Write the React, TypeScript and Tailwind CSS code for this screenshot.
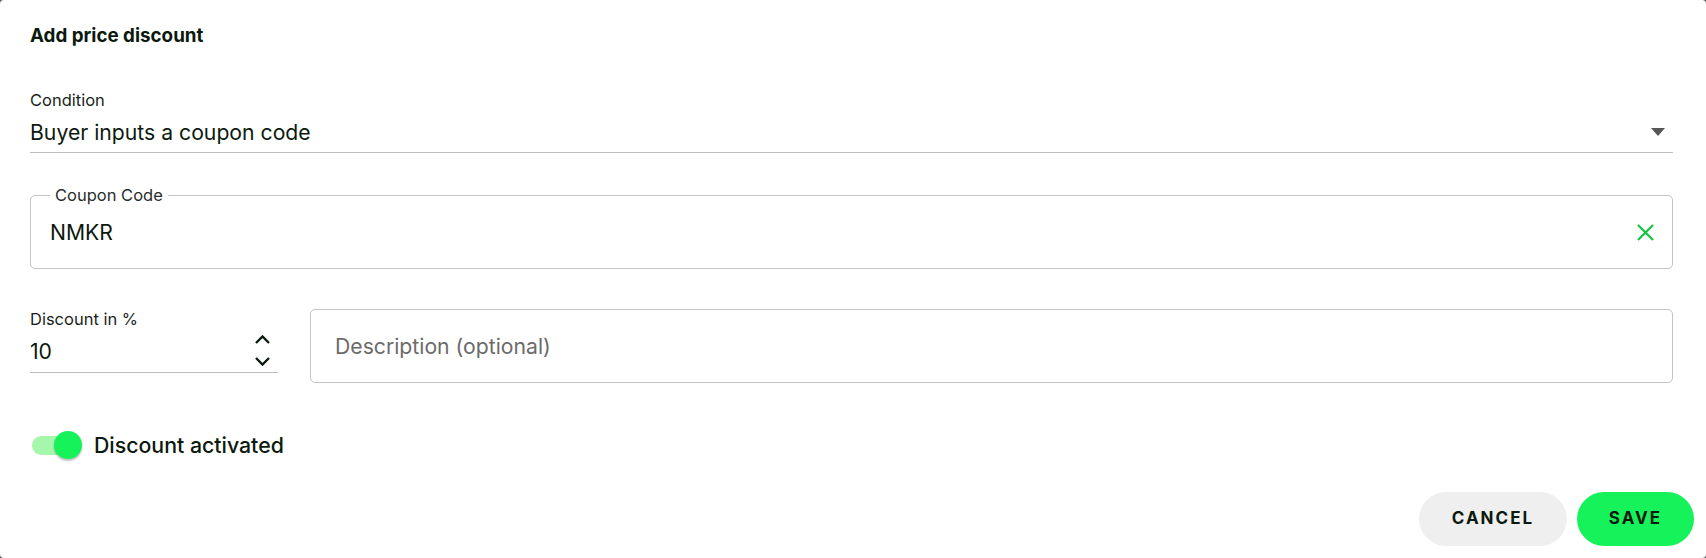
export default function App() {
  return (
    <div className="w-full h-[558px] bg-[#5c5c5c]">
      <div className="h-full bg-white rounded-[4px] flex flex-col font-['Inter',sans-serif] text-[#0c1a0e]">
        <div className="pl-[30px] pr-[33px] pt-[24px] flex flex-col">
          <h2 className="text-[18.8px] leading-[24px] font-bold">Add price discount</h2>

          <div className="mt-[42px] text-[16.5px] leading-[20px] text-[#1a1f1b]">Condition</div>
          <div className="mt-[8px] flex items-center justify-between border-b border-[#bdbdbd] pb-[6px]">
            <span className="text-[21.2px] leading-[28px]">Buyer inputs a coupon code</span>
            <svg width="14" height="8" viewBox="0 0 14 8" className="mr-[8px]">
              <path d="M0 0 L14 0 L7 8 Z" fill="#555555" />
            </svg>
          </div>

          <div className="relative mt-[42px] h-[74px] border border-[#c4c4c4] rounded-[5px] flex items-center justify-between pl-[19px] pr-[17px]">
            <span className="absolute -top-[11px] left-[19px] px-[5px] bg-white text-[16.5px] leading-[20px] text-[#2a2e2b]">Coupon Code</span>
            <span className="text-[21.2px] leading-[28px]">NMKR</span>
            <svg width="19" height="19" viewBox="0 0 19 19">
              <path d="M2 2 L17 17 M17 2 L2 17" stroke="#15c43f" strokeWidth="2.2" strokeLinecap="butt" />
            </svg>
          </div>

          <div className="mt-[40px] flex gap-[32px] items-start">
            <div className="w-[248px] shrink-0 flex flex-col">
              <div className="text-[16.5px] leading-[20px] text-[#1a1f1b]">Discount in %</div>
              <div className="mt-[6px] flex items-center justify-between border-b border-[#bdbdbd] pb-[6px]">
                <span className="text-[21.2px] leading-[28px]">10</span>
                <div className="flex flex-col items-center gap-[13px] mr-[8px]">
                  <svg width="15" height="9" viewBox="0 0 15 9">
                    <path d="M1 8 L7.5 1.5 L14 8" stroke="#0c1a0e" strokeWidth="2.4" fill="none" />
                  </svg>
                  <svg width="15" height="9" viewBox="0 0 15 9">
                    <path d="M1 1 L7.5 7.5 L14 1" stroke="#0c1a0e" strokeWidth="2.4" fill="none" />
                  </svg>
                </div>
              </div>
            </div>
            <div className="flex-1 h-[74px] border border-[#c4c4c4] rounded-[5px] flex items-center pl-[24px]">
              <span className="text-[21.2px] leading-[28px] text-[#6b6b6b]">Description (optional)</span>
            </div>
          </div>

          <div className="mt-[48px] flex items-center">
            <div className="relative w-[52px] h-[28px] flex items-center">
              <div className="absolute left-[2px] w-[46px] h-[19px] rounded-full bg-[#a5f7ac]" />
              <div className="absolute left-[24px] w-[28px] h-[28px] rounded-full bg-[#16f35a] shadow-[0_2px_2px_rgba(0,0,0,0.25)]" />
            </div>
            <span className="ml-[12px] text-[21.3px] leading-[28px] font-medium">Discount activated</span>
          </div>
        </div>

        <div className="mt-auto flex justify-end gap-[10px] pr-[12px] pb-[12px]">
          <button className="w-[148px] h-[54px] rounded-full bg-[#efefef] text-[17px] font-bold tracking-[0.12em] text-[#0c1a0e]">CANCEL</button>
          <button className="w-[117px] h-[54px] rounded-full bg-[#16f35a] text-[17px] font-bold tracking-[0.12em] text-[#0c1a0e]">SAVE</button>
        </div>
      </div>
    </div>
  );
}
